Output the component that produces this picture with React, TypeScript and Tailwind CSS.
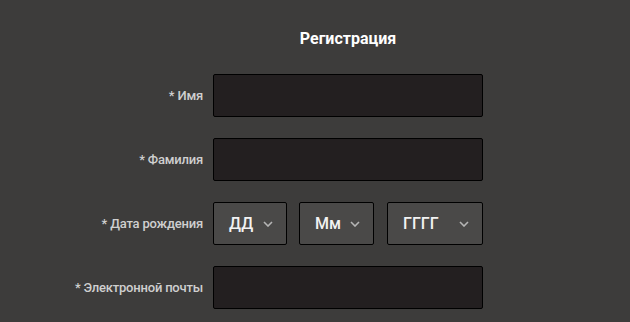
const Chevron = () => (
  <svg width="10" height="6" viewBox="0 0 10 6" fill="none" className="text-[#b5b5b5]">
    <path d="M1 1l4 4 4-4" stroke="currentColor" strokeWidth="1.6" />
  </svg>
);

const Label = ({ children }: { children: string }) => (
  <label className="w-[213px] shrink-0 pr-[10px] text-right text-[13px] font-medium tracking-[-0.2px] text-[#cfcfcf]">
    {children}
  </label>
);

const Select = ({ value, className }: { value: string; className: string }) => (
  <div
    className={`${className} h-[43px] flex items-center justify-between pl-[15px] pr-[13px] bg-[#4a4948] border border-black rounded-[2px]`}
  >
    <span className="text-[16px] font-medium text-[#f2f2f2]">{value}</span>
    <Chevron />
  </div>
);

const App = () => {
  return (
    <div
      className="w-[630px] h-[322px] bg-[#3d3c3b] overflow-hidden"
      style={{ fontFamily: "Roboto, 'Noto Sans', sans-serif" }}
    >
      <div className="flex flex-col pt-[29px]">
        <div className="flex">
          <div className="w-[213px] shrink-0" />
          <h1 className="w-[270px] text-center text-[16px] font-bold text-white leading-[20px]">Регистрация</h1>
        </div>
        <div className="flex flex-col gap-[21px] mt-[25px]">
          <div className="flex items-center">
            <Label>* Имя</Label>
            <div className="w-[270px] h-[43px] bg-[#231f20] border border-black rounded-[2px]" />
          </div>
          <div className="flex items-center">
            <Label>* Фамилия</Label>
            <div className="w-[270px] h-[43px] bg-[#231f20] border border-black rounded-[2px]" />
          </div>
          <div className="flex items-center">
            <Label>* Дата рождения</Label>
            <div className="flex">
              <Select value="ДД" className="w-[74px]" />
              <Select value="Мм" className="w-[75px] ml-[12px]" />
              <Select value="ГГГГ" className="w-[96px] ml-[13px]" />
            </div>
          </div>
          <div className="flex items-center">
            <Label>* Электронной почты</Label>
            <div className="w-[270px] h-[43px] bg-[#231f20] border border-black rounded-[2px]" />
          </div>
        </div>
      </div>
    </div>
  );
};

export default App;
